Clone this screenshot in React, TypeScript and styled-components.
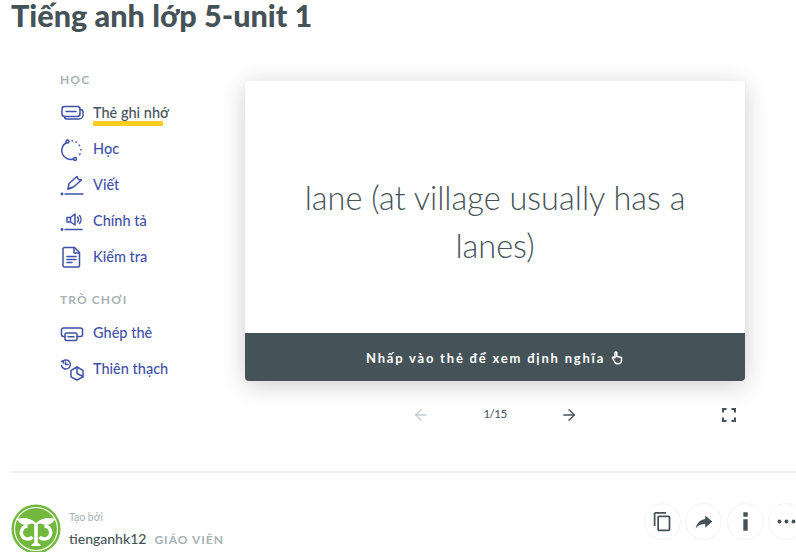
import React from "react";
import styled, { createGlobalStyle } from "styled-components";
import { ArrowLeft, ArrowRight } from "lucide-react";

const GlobalStyle = createGlobalStyle`
  html, body {
    margin: 0;
    padding: 0;
    width: 796px;
    height: 552px;
    overflow: hidden;
    background: #fff;
    font-family: "Lato", "Noto Sans", sans-serif;
    color: #455358;
  }
`;

const Page = styled.div`
  width: 796px;
  height: 552px;
  overflow: hidden;
  padding-left: 11px;
  box-sizing: border-box;
`;

const Title = styled.h1`
  margin: 0;
  height: 32px;
  font-size: 30.6px;
  line-height: 32px;
  font-weight: 900;
  color: #455358;
  white-space: nowrap;
`;

const Study = styled.div`
  display: flex;
  margin-top: 41px;
`;

const Sidebar = styled.nav`
  width: 234px;
  padding-left: 49px;
  box-sizing: border-box;
`;

const GroupLabel = styled.div<{ $gap?: number }>`
  height: 14px;
  margin-top: ${(p) => p.$gap ?? 0}px;
  margin-bottom: 7px;
  font-size: 12px;
  line-height: 14px;
  font-weight: 700;
  letter-spacing: 1.1px;
  color: #a8b1b5;
`;

const NavRow = styled.div`
  display: flex;
  align-items: center;
  height: 36px;
`;

const NavIcon = styled.svg`
  width: 24px;
  height: 24px;
  margin: 4px 9px 0 0;
  flex: none;
  fill: none;
  stroke: #3f51a8;
  stroke-width: 1.5;
  stroke-linecap: round;
  stroke-linejoin: round;
`;

const NavText = styled.span<{ $active?: boolean }>`
  position: relative;
  font-size: 14.5px;
  font-weight: 500;
  white-space: nowrap;
  color: ${(p) => (p.$active ? "#455358" : "#3f51a8")};

  ${(p) =>
    p.$active &&
    `&::after {
      content: "";
      position: absolute;
      left: 0;
      bottom: -5px;
      width: 70px;
      height: 5px;
      background: #ffcd1f;
    }`}
`;

const Stage = styled.div`
  width: 500px;
  padding-top: 8px;
`;

const Card = styled.div`
  height: 300px;
  display: flex;
  flex-direction: column;
  border-radius: 4px;
  overflow: hidden;
  background: #fff;
  box-shadow: 0 4px 24px rgba(0, 0, 0, 0.2);
`;

const CardFace = styled.div`
  flex: 1;
  display: flex;
  align-items: center;
  justify-content: center;
  padding: 30px 40px 0;
  text-align: center;
  font-size: 32.5px;
  line-height: 48px;
  font-weight: 300;
  color: #455358;
`;

const CardHint = styled.div`
  height: 48px;
  padding-top: 2px;
  box-sizing: border-box;
  display: flex;
  align-items: center;
  justify-content: center;
  gap: 5px;
  background: #455358;
  color: #fff;
  font-size: 13px;
  font-weight: 700;
  letter-spacing: 1.8px;
`;

const Controls = styled.div`
  position: relative;
  display: flex;
  align-items: center;
  justify-content: center;
  gap: 50px;
  height: 28px;
  margin-top: 20px;
  color: #455358;
`;

const Counter = styled.span`
  width: 30px;
  margin-top: -3px;
  text-align: center;
  font-size: 11.5px;
  letter-spacing: -0.5px;
`;

const Fullscreen = styled.svg`
  position: absolute;
  right: 9px;
  top: 7px;
  width: 14px;
  height: 14px;
  fill: none;
  stroke: #455358;
  stroke-width: 2;
`;

const Divider = styled.div`
  height: 2px;
  margin-top: 42px;
  background: #eff1f2;
`;

const Footer = styled.div`
  display: flex;
  justify-content: space-between;
  margin-top: 31px;
`;

const Author = styled.div`
  display: flex;
  gap: 8px;
`;

const Avatar = styled.svg`
  width: 50px;
  height: 50px;
  flex: none;
`;

const AuthorMeta = styled.div`
  padding-top: 6px;
`;

const Caption = styled.div`
  font-size: 10.5px;
  line-height: 14px;
  color: #a8b1b5;
`;

const NameRow = styled.div`
  display: flex;
  align-items: baseline;
  gap: 8px;
  margin-top: 6px;
`;

const Name = styled.span`
  font-size: 14px;
  font-weight: 500;
  color: #455358;
`;

const Role = styled.span`
  font-size: 12px;
  font-weight: 700;
  letter-spacing: 1px;
  color: #a8b1b5;
`;

const Actions = styled.div`
  display: flex;
  gap: 4.3px;
  margin-top: -1px;
  margin-right: -9px;
`;

const RoundButton = styled.div`
  width: 37px;
  height: 37px;
  display: flex;
  align-items: center;
  justify-content: center;
  border: 1px solid #f3f4f5;
  border-radius: 50%;
  box-sizing: border-box;
  color: #455358;
`;

const Glyph = styled.svg`
  width: 21px;
  height: 21px;
  fill: currentColor;
`;

export default function App() {
  return (
    <Page>
      <GlobalStyle />
      <Title>Tiếng anh lớp 5-unit 1</Title>
      <Study>
        <Sidebar>
          <GroupLabel>HỌC</GroupLabel>
          <NavRow>
            <NavIcon viewBox="0 0 24 24">
              <rect x="2" y="4.5" width="18" height="10" rx="2.5" />
              <path d="M6 9.5h10M20 7.5h.5a2.5 2.5 0 0 1 2.5 2.5v3a4 4 0 0 1-4 4H7a2.5 2.5 0 0 1-2.5-2.5" />
            </NavIcon>
            <NavText $active>Thẻ ghi nhớ</NavText>
          </NavRow>
          <NavRow>
            <NavIcon viewBox="0 0 24 24">
              <path d="M6.5 4.5a9 9 0 0 0 7 16.5" />
              <circle cx="7.5" cy="3.5" r="1.5" />
              <circle cx="15" cy="21" r="1.5" />
              <path d="M12 2.800h.4M16 4l.4.3M19.300 7.200l.3.5M21 11.500v.5M20 16l-.3.5" />
            </NavIcon>
            <NavText>Học</NavText>
          </NavRow>
          <NavRow>
            <NavIcon viewBox="0 0 24 24">
              <path d="M8 15l1-5.500 8-7 1.500 3 3 .5-8 7z" />
              <path d="M8 15l4-1.500M5 20h18" />
              <circle cx="2" cy="20" r=".7" />
            </NavIcon>
            <NavText>Viết</NavText>
          </NavRow>
          <NavRow>
            <NavIcon viewBox="0 0 24 24">
              <path d="M7 7.500h3.500L15 4v11l-4.500-3H7zM10.500 7.500V12M17.500 7a4 4 0 0 1 0 5M19.500 5.500a6 6 0 0 1 0 8" />
              <path d="M5 19.500h17" />
              <circle cx="2" cy="19.500" r=".7" />
            </NavIcon>
            <NavText>Chính tả</NavText>
          </NavRow>
          <NavRow>
            <NavIcon viewBox="0 0 24 24">
              <path d="M4.500 1.500h10l5 5v13a1.500 1.500 0 0 1-1.500 1.500H4.500A1.500 1.500 0 0 1 3 19.500V3A1.500 1.500 0 0 1 4.500 1.500z" />
              <path d="M14 1.500V7h5.500M7 10.500h9M7 13.500h9M7 16.500h5" />
            </NavIcon>
            <NavText>Kiểm tra</NavText>
          </NavRow>
          <GroupLabel $gap={19}>TRÒ CHƠI</GroupLabel>
          <NavRow>
            <NavIcon viewBox="0 0 24 24">
              <path d="M5 14.500H3.500a2 2 0 0 1-2-2V8a2 2 0 0 1 2-2h17a2 2 0 0 1 2 2v4.500a2 2 0 0 1-2 2H17" />
              <rect x="5" y="11" width="12" height="7.500" rx="1.500" />
              <path d="M8 14.800h6" />
            </NavIcon>
            <NavText>Ghép thẻ</NavText>
          </NavRow>
          <NavRow>
            <NavIcon viewBox="0 0 24 24">
              <path d="M3 3a4.500 4.500 0 1 1-1.500 4.500" />
              <path d="M1.500 3.500 3 3l.5 2M5.500 4v2.500H8" />
              <path d="m17 9 6 3.400v6.400L17 22l-6-3.200v-6.400z" />
              <path d="M17 15.500V9M17 15.500l6 3" />
            </NavIcon>
            <NavText>Thiên thạch</NavText>
          </NavRow>
        </Sidebar>
        <Stage>
          <Card>
            <CardFace>lane (at village usually has a lanes)</CardFace>
            <CardHint>
              Nhấp vào thẻ để xem định nghĩa
              <svg width="14" height="14" viewBox="0 0 14 14" fill="none" stroke="#fff" strokeWidth="1.5" strokeLinejoin="round">
                <path d="M5 1.500v5.200L3.200 6C2.600 6 2.200 6.600 2.600 7.200L5 11.500c.6.9 1.400 1.200 2.600 1.200 2.400 0 3.900-1.600 3.900-3.800V6.500L6.800 5.600V1.500C6.500.9 5.300.9 5 1.500z" />
              </svg>
            </CardHint>
          </Card>
          <Controls>
            <ArrowLeft size={18} color="#c5ced2" strokeWidth={1.75} />
            <Counter>1/15</Counter>
            <ArrowRight size={18} color="#455358" strokeWidth={1.75} />
            <Fullscreen viewBox="0 0 14 14">
              <path d="M1 4.500V1h3.500M9.500 1H13v3.500M13 9.500V13H9.500M4.500 13H1V9.500" />
            </Fullscreen>
          </Controls>
        </Stage>
      </Study>
      <Divider />
      <Footer>
        <Author>
          <Avatar viewBox="0 0 50 50">
            <circle cx="25" cy="25" r="24.500" fill="#72b83c" />
            <circle cx="25" cy="25" r="21.500" fill="none" stroke="#fff" strokeWidth="1.200" />
            <path d="M6 15c6-2 14-1 19 4 5-5 13-6 19-4-2 5-8 7-13 5-2.500-1-4.500 0-6 1.500-1.500-1.500-3.500-2.500-6-1.500-5 2-11 0-13-5z" fill="#fff" />
            <path d="M21.500 33a6.500 6.500 0 1 1-5-11" fill="none" stroke="#fff" strokeWidth="3.400" />
            <path d="M28.500 33a6.500 6.500 0 1 0 5-11" fill="none" stroke="#fff" strokeWidth="3.400" />
            <path d="M25 19v20" stroke="#fff" strokeWidth="3.600" />
            <path d="M19.500 42c2-2.500 3-3 5.500-3s3.500.5 5.500 3z" fill="#fff" />
          </Avatar>
          <AuthorMeta>
            <Caption>Tạo bởi</Caption>
            <NameRow>
              <Name>tienganhk12</Name>
              <Role>GIÁO VIÊN</Role>
            </NameRow>
          </AuthorMeta>
        </Author>
        <Actions>
          <RoundButton>
            <Glyph viewBox="0 0 24 24">
              <path d="M16 1H4c-1.100 0-2 .9-2 2v14h2V3h12V1zm3 4H8c-1.100 0-2 .9-2 2v14c0 1.100.9 2 2 2h11c1.100 0 2-.9 2-2V7c0-1.100-.9-2-2-2zm0 16H8V7h11v14z" />
            </Glyph>
          </RoundButton>
          <RoundButton>
            <Glyph viewBox="0 0 24 24">
              <path d="M14 5l8 7-8 7v-4.100C9 14.900 5.500 16.500 3 20c1-5 4-10 11-11z" />
            </Glyph>
          </RoundButton>
          <RoundButton>
            <Glyph viewBox="0 0 24 24">
              <path d="M9.500 1.500h5v5h-5zM9.500 9.500h5v13h-5z" />
            </Glyph>
          </RoundButton>
          <RoundButton>
            <Glyph viewBox="0 0 24 24">
              <circle cx="4" cy="12" r="2.200" />
              <circle cx="12" cy="12" r="2.200" />
              <circle cx="20" cy="12" r="2.200" />
            </Glyph>
          </RoundButton>
        </Actions>
      </Footer>
    </Page>
  );
}
